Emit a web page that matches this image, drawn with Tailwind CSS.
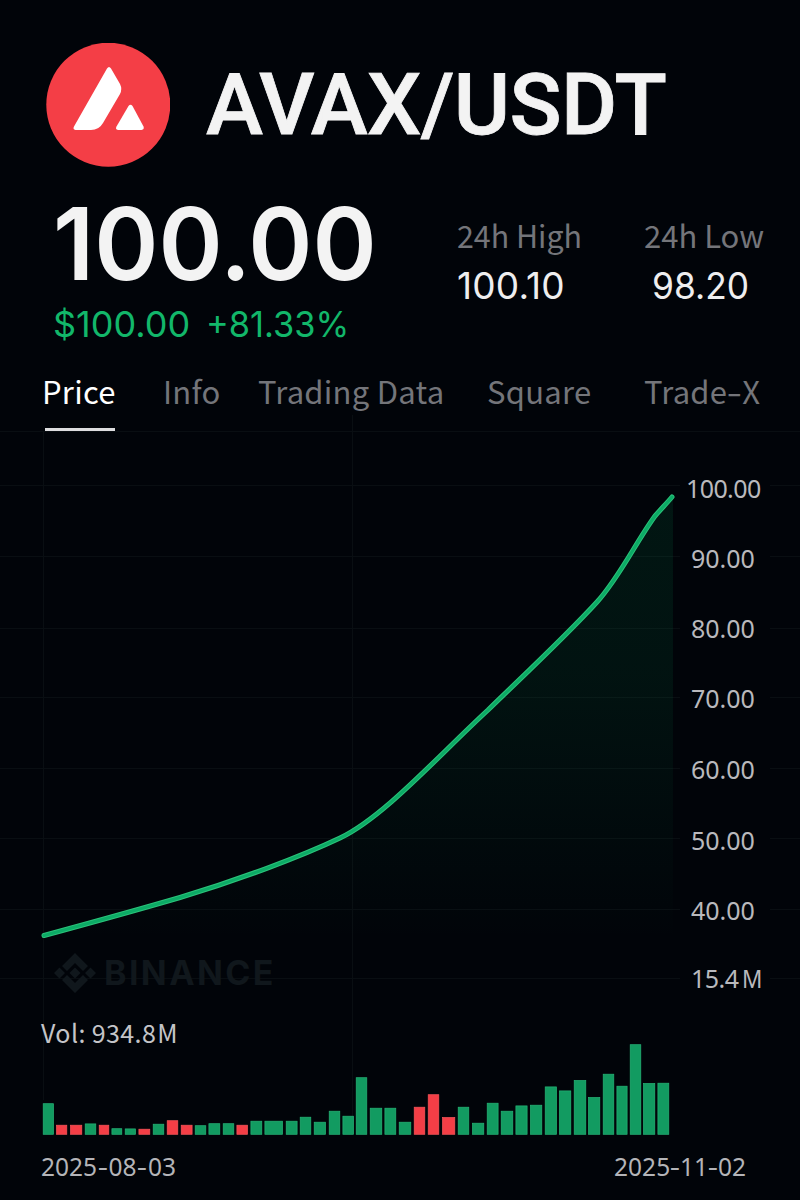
<!DOCTYPE html>
<html lang="en">
<head>
<meta charset="utf-8">
<title>AVAX/USDT</title>
<script src="https://cdn.jsdelivr.net/npm/@tailwindcss/browser@4"></script>
</head>
<body class="bg-[#010409]">
<main class="relative flex h-[1200px] w-[800px] flex-col overflow-hidden bg-[#010409] font-['Noto_Sans',sans-serif] whitespace-nowrap">

  <!-- price chart canvas behind the page content -->
  <svg class="absolute inset-0" width="800" height="1200" viewBox="0 0 800 1200" fill="none">
    <defs>
      <linearGradient id="area" x1="0" y1="497" x2="0" y2="940" gradientUnits="userSpaceOnUse">
        <stop offset="0" stop-color="#05a860" stop-opacity=".11"/>
        <stop offset=".4" stop-color="#05a860" stop-opacity=".09"/>
        <stop offset="1" stop-color="#05a860" stop-opacity="0"/>
      </linearGradient>
    </defs>
    <path d="M0 431.5H800M0 485.500H680M770 485.500H800M0 556.500H680M770 556.500H800M0 628.500H680M770 628.500H800M0 697.500H680M770 697.500H800M0 768.500H680M770 768.500H800M0 838.500H680M770 838.500H800M0 909.500H680M770 909.500H800M0 978.500H680M770 978.500H800M43.500 431V1100M352.500 415V1130" stroke="#090e12"/>
    <path d="M44 935.500C90 923 137 910 180 897.500C238 880 300 857 340 838C384 817 438 756 488 710C524 675 565 637 597 602C619 578 636 542 655 516C661 509 667 503 672 497H673V978H44Z" fill="url(#area)"/>
    <path d="M44 935.500C90 923 137 910 180 897.500C238 880 300 857 340 838C384 817 438 756 488 710C524 675 565 637 597 602C619 578 636 542 655 516C661 509 667 503 672 497" stroke="#2bc27a" stroke-width="5" stroke-linecap="round"/>
    <path d="M44 935.500C90 923 137 910 180 897.500C238 880 300 857 340 838C384 817 438 756 488 710C524 675 565 637 597 602C619 578 636 542 655 516C661 509 667 503 672 497" stroke="#0cab66" stroke-width="3" stroke-linecap="round"/>
  </svg>

  <header class="relative flex h-[124px] shrink-0 items-center mt-[43px] pl-[46px]">
    <svg width="124" height="124" viewBox="46 43 124 124" class="shrink-0">
      <circle cx="108.300" cy="104.700" r="62" fill="#f43e46"/>
      <path d="M107 68.500Q109 65.500 111 68.500L120 84Q122.500 89 120 94L103 123Q99 130 91 130H75.500Q72.500 129.500 74 126.500Z" fill="#fff"/>
      <path d="M128.500 106Q130.500 103.500 132.500 106L143.500 126.500Q144.500 129.500 141.500 130H118Q115 129.500 116.500 126.500Z" fill="#fff"/>
    </svg>
    <h1 class="ml-[36px] font-['Roboto'] text-[86px] leading-[124px] font-medium tracking-[-0.6px] text-[#f3f3f3] [-webkit-text-stroke:0.8px_#f3f3f3]">AVAX/USDT</h1>
  </header>

  <section class="relative flex h-[180px] shrink-0 pt-[23px] font-['Inter']">
    <div class="w-[457px] pl-[53px]">
      <div class="h-[108px] origin-left scale-x-[0.964] text-[101px] leading-[106px] font-semibold text-[#f3f3f3]">100.00</div>
      <div class="flex gap-[16px] text-[36px] leading-[52px] text-[#12b76a]"><span>$100.00</span><span class="origin-left scale-x-[0.955]">+81.33%</span></div>
    </div>
    <div class="w-[187px] pt-[22px]">
      <div class="origin-left scale-x-[0.98] font-['Noto_Sans_CJK_SC'] text-[31px] leading-[46px] text-[#74757a]">24h High</div>
      <div class="text-[37px] leading-[56px] tracking-[0.2px] text-[#eeeeef]">100.10</div>
    </div>
    <div class="pt-[22px]">
      <div class="font-['Noto_Sans_CJK_SC'] text-[31px] leading-[46px] text-[#74757a]">24h Low</div>
      <div class="ml-[8px] origin-left scale-x-[0.955] text-[37px] leading-[56px] text-[#eeeeef]">98.20</div>
    </div>
  </section>

  <nav class="relative flex h-[84px] shrink-0 pt-[17px] pl-[42px] font-['Noto_Sans_CJK_SC'] text-[31px] leading-[54px] tracking-[0.25px] text-[#74757a]">
    <div class="w-[121px] text-white">Price<div class="ml-[3px] mt-[10px] h-[3px] w-[70px] bg-[#dddddf]"></div></div>
    <div class="w-[95px]">Info</div>
    <div class="w-[229px]">Trading Data</div>
    <div class="w-[157px]">Square</div>
    <div>Trade<span class="mx-[2px] inline-block scale-x-[1.45]">-</span>X</div>
  </nav>

  <section class="relative flex h-[569px] shrink-0 justify-between">
    <div class="flex items-end pb-[6px] pl-[54px]">
      <svg width="42" height="42" viewBox="0 0 42 42" fill="#10171c">
        <path d="M21 1 34 14 29 19 21 11 13 19 8 14ZM21 41 8 28 13 23 21 31 29 23 34 28ZM21 15.500 26.500 21 21 26.500 15.500 21ZM0 21 5.500 15.500 11 21 5.500 26.500ZM31 21 36.500 15.500 42 21 36.500 26.500Z"/>
      </svg>
      <div class="ml-[8px] font-['Inter'] text-[34px] leading-[42px] font-bold tracking-[2.4px] text-[#10171c]">BINANCE</div>
    </div>
    <div class="w-[114px] pt-[37px] text-[25px] leading-[40px] text-[#b9b9bd]">
      <div class="h-[70px] tracking-[-0.6px]">100.00</div>
      <div class="h-[70px] pl-[5px]">90.00</div>
      <div class="h-[70px] pl-[5px]">80.00</div>
      <div class="h-[71px] pl-[5px]">70.00</div>
      <div class="h-[71px] pl-[5px]">60.00</div>
      <div class="h-[70px] pl-[5px]">50.00</div>
      <div class="h-[68px] pl-[5px]">40.00</div>
      <div class="pl-[5px] tracking-[-0.5px]">15.4<span class="ml-[3px] inline-block origin-left scale-x-[0.9]">M</span></div>
    </div>
  </section>

  <section class="relative shrink-0 pl-[41px]">
    <div class="mt-[12px] h-[32px] font-['Noto_Sans_CJK_SC'] text-[25px] leading-[40px] tracking-[0.4px] text-[#c4c4c8]">Vol: 934.8<span class="ml-[1px]">M</span></div>
    <svg class="-ml-[41px]" width="800" height="92" viewBox="0 1044 800 92">
      <g fill="#129b61" stroke="#27b577" stroke-width=".7" id="up"></g>
      <g fill="#f43e46" stroke="#f8565b" stroke-width=".7" id="down"></g>
    </svg>
    <div class="mt-[12px] flex justify-between pr-[54px] text-[24.500px] leading-[38px] text-[#b4b4b8]"><span>2025<span class="mx-[1.800px] inline-block scale-x-[1.3]">-</span>08<span class="mx-[1.800px] inline-block scale-x-[1.3]">-</span>03</span><span>2025<span class="mx-[1px] inline-block scale-x-[1.3]">-</span>11<span class="mx-[1px] inline-block scale-x-[1.3]">-</span>02</span></div>
  </section>
</main>
<script>
  // left, right, top, and 1 for a falling day
  const bars = [[43,53.7,1103.5],[56.3,67,1125,1],[70.3,82,1125,1],[85,96,1123.7],[99,109,1125,1],[111.7,122,1128.5],[125,135.7,1128.7],[138.7,150,1129,1],[153,164,1124],[167,178,1120.5,1],[181,192.3,1125,1],[195,206,1125.5],[208.7,220,1123.5],[223,234,1123.5],[236.7,247.7,1125,1],[250.7,262,1121],[264.7,282.7,1121],[286,297.3,1121],[300,311,1117],[314,325.7,1122],[329,340,1111],[342.7,353.7,1116],[356,367,1077.5],[370,382,1108],[384.7,396,1108],[399,411,1122],[414,425,1107,1],[428,439,1094.5,1],[442.3,455,1117.3,1],[458,469,1107],[472.3,484,1123],[487,498.3,1103],[501,513,1111],[515.7,527.3,1105.7],[530.3,542,1105],[545,556.7,1086.7],[559.3,571,1090.7],[574,586,1080.3],[588.3,600,1097.3],[603,614,1074],[616.7,627.3,1086],[630,641,1044.5],[643.3,655,1083.3],[657.7,669,1083]];
  for (const [l, r, t, down] of bars) {
    const e = document.createElementNS('http://www.w3.org/2000/svg', 'rect');
    e.setAttribute('x', l + .2); e.setAttribute('y', t + .2);
    e.setAttribute('width', r - l - .4); e.setAttribute('height', 1134.100 - t);
    document.getElementById(down ? 'down' : 'up').append(e);
  }
</script>
</body>
</html>
